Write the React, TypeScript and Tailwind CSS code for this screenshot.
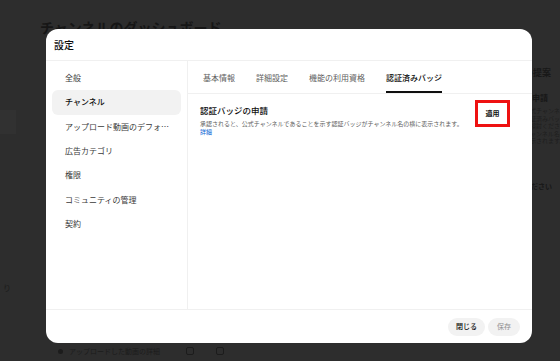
import React from "react";

const navItems = [
  "全般",
  "チャンネル",
  "アップロード動画のデフォ…",
  "広告カテゴリ",
  "権限",
  "コミュニティの管理",
  "契約",
];

const tabs = ["基本情報", "詳細設定", "機能の利用資格", "認証済みバッジ"];

export default function App() {
  return (
    <div
      className="relative w-[560px] h-[361px] overflow-hidden bg-[#2d2d2d]"
      style={{ fontFamily: '"Noto Sans CJK JP", "Noto Sans", sans-serif' }}
    >
      {/* Background page (under dim overlay) */}
      <div className="flex h-full">
        <div className="w-[524px] shrink-0 flex flex-col">
          <div className="pl-[40px] pt-[17px] text-[14px] leading-[20px] font-bold text-[#161616] whitespace-nowrap">
            チャンネルのダッシュボード
          </div>
          <div className="mt-[73px] w-[16px] h-[24px] bg-[#313131]" />
          <div className="mt-[148px] pl-[3px] text-[8px] text-[#1c1c1c]">り</div>
          <div className="mt-[52px] pl-[58px] flex items-center gap-[6px] text-[7px] text-[#1c1c1c] whitespace-nowrap">
            <span className="w-[5px] h-[5px] rounded-full bg-[#1c1c1c]" />
            <span>アップロードした動画の詳細</span>
            <span className="ml-[20px] w-[8px] h-[8px] border border-[#1c1c1c] rounded-[2px]" />
            <span className="ml-[16px] w-[8px] h-[8px] border border-[#1c1c1c] rounded-[2px]" />
          </div>
        </div>
        <div className="flex-1 pt-[67px] text-[#181818] whitespace-nowrap">
          <div className="text-[9px] leading-[12px] font-bold">の提案</div>
          <div className="mt-[13px] text-[8px] leading-[12px] font-bold">を申請</div>
          <div className="mt-[3px] flex flex-col text-[6px] leading-[7.5px] text-[#1e1e1e]">
            <span>公式チャンネル</span>
            <span>認証済みバッジ</span>
            <span>ご検討ください</span>
            <span>チャンネル名の</span>
            <span>表示されます。</span>
          </div>
          <div className="mt-[36px] text-[7px] leading-[10px] font-bold">ください</div>
        </div>
      </div>

      {/* Modal dialog */}
      <div className="absolute left-[46px] top-[29px] w-[486px] h-[314px] rounded-[12px] bg-white flex flex-col overflow-hidden text-[#0f0f0f]">
        <div className="h-[32px] shrink-0 flex items-center pl-[8px] border-b border-[#f0f0f0] text-[10px] font-medium">
          設定
        </div>
        <div className="flex-1 flex min-h-0">
          <div className="w-[142px] shrink-0 border-r border-[#f0f0f0] pt-[5px] px-[6px] flex flex-col">
            {navItems.map((item, i) => (
              <div
                key={item}
                className={
                  i === 1
                    ? "h-[24.3px] shrink-0 flex items-center pl-[13px] rounded-[6px] bg-[#f2f2f2] text-[8px] font-medium text-[#0f0f0f] whitespace-nowrap"
                    : "h-[24.3px] shrink-0 flex items-center pl-[13px] rounded-[6px] text-[8px] text-[#3a3a3a] whitespace-nowrap"
                }
              >
                {item}
              </div>
            ))}
          </div>
          <div className="flex-1 flex flex-col min-w-0">
            <div className="h-[33px] shrink-0 flex items-stretch gap-[21px] pl-[15px] border-b border-[#f0f0f0]">
              {tabs.map((t, i) => (
                <div
                  key={t}
                  className={
                    i === 3
                      ? "flex items-center text-[8px] text-[#0f0f0f] font-medium border-b-[2px] border-[#0f0f0f] pt-[3px] whitespace-nowrap"
                      : "flex items-center text-[8px] text-[#606060] border-b-[2px] border-transparent pt-[3px] whitespace-nowrap"
                  }
                >
                  {t}
                </div>
              ))}
            </div>
            <div className="flex-1 flex items-start justify-between pl-[12px] pr-[22px] pt-[6px]">
              <div className="flex flex-col pt-[4px]">
                <div className="text-[8.5px] leading-[12px] font-medium text-[#0f0f0f] whitespace-nowrap">
                  認証バッジの申請
                </div>
                <div className="mt-[4px] text-[6px] leading-[8px] text-[#606060] whitespace-nowrap">
                  承認されると、公式チャンネルであることを示す認証バッジがチャンネル名の横に表示されます。
                </div>
                <div className="text-[6px] leading-[8px] text-[#065fd4]">詳細</div>
              </div>
              <div className="w-[35px] h-[27px] border-[3px] border-[#ee1111] bg-white flex items-center justify-center">
                <span className="text-[7px] font-bold text-[#0f0f0f]">適用</span>
              </div>
            </div>
          </div>
        </div>
        <div className="h-[34px] shrink-0 border-t border-[#f0f0f0] flex items-center justify-end gap-[3px] pr-[12px]">
          <div className="h-[18px] px-[8px] rounded-full bg-[#f2f2f2] flex items-center text-[7px] font-medium text-[#0f0f0f]">
            閉じる
          </div>
          <div className="h-[18px] px-[9px] rounded-full bg-[#f2f2f2] flex items-center text-[7px] text-[#909090]">
            保存
          </div>
        </div>
      </div>
    </div>
  );
}
